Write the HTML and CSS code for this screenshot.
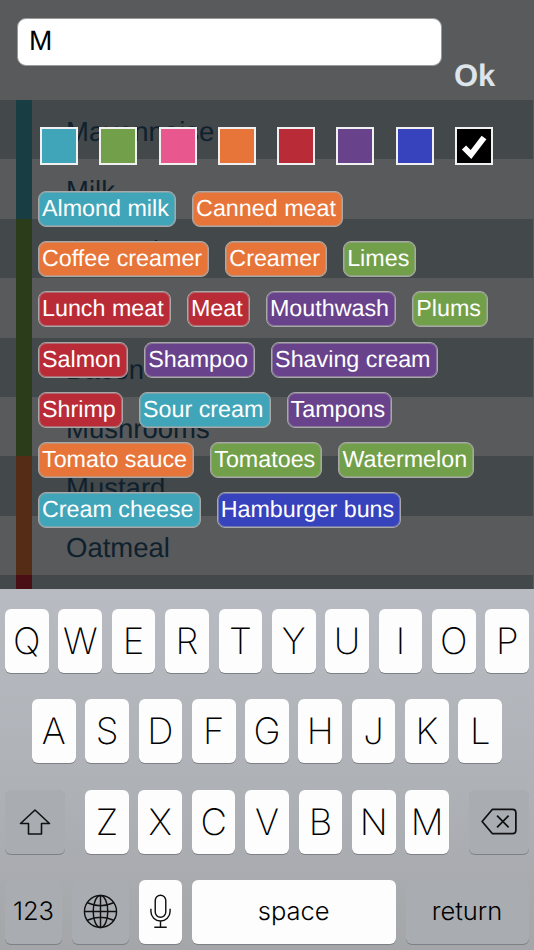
FILE: index.html
```html
<!DOCTYPE html>
<html lang="en">
<head>
<meta charset="utf-8">
<title>Add item</title>
<link rel="stylesheet" href="styles.css">
</head>
<body>
<div class="screen">
  <div class="content">
    <div class="header-space"></div>
    <div class="row dark teal"><span class="strip"></span><span class="name">Mayonnaise</span></div>
    <div class="row teal"><span class="strip"></span><span class="name">Milk</span></div>
    <div class="row dark green"><span class="strip"></span><span class="name">Cucumbers</span></div>
    <div class="row green"><span class="strip"></span><span class="name"></span></div>
    <div class="row dark green"><span class="strip"></span><span class="name">Bacon</span></div>
    <div class="row green"><span class="strip"></span><span class="name">Mushrooms</span></div>
    <div class="row dark orange"><span class="strip"></span><span class="name">Mustard</span></div>
    <div class="row orange"><span class="strip"></span><span class="name">Oatmeal</span></div>
    <div class="row dark red"><span class="strip"></span><span class="name"></span></div>

    <div class="panel">
      <div class="form">
        <div class="input">M</div>
        <div class="ok">Ok</div>
      </div>
      <div class="swatches">
        <span class="swatch c-teal"></span>
        <span class="swatch c-green"></span>
        <span class="swatch c-pink"></span>
        <span class="swatch c-orange"></span>
        <span class="swatch c-red"></span>
        <span class="swatch c-purple"></span>
        <span class="swatch c-blue"></span>
        <span class="swatch c-black">
          <svg viewBox="0 0 34 34" width="34" height="34"><path d="M7 18.5 L14 25.5 L27 8.5" fill="none" stroke="#fff" stroke-width="6"/></svg>
        </span>
      </div>
      <div class="tags">
        <span class="tag c-teal">Almond milk</span>
        <span class="tag c-orange">Canned meat</span>
        <span class="tag c-orange">Coffee creamer</span>
        <span class="tag c-orange">Creamer</span>
        <span class="tag c-green">Limes</span>
        <span class="tag c-red">Lunch meat</span>
        <span class="tag c-red">Meat</span>
        <span class="tag c-purple">Mouthwash</span>
        <span class="tag c-green">Plums</span>
        <span class="tag c-red">Salmon</span>
        <span class="tag c-purple">Shampoo</span>
        <span class="tag c-purple">Shaving cream</span>
        <span class="tag c-red">Shrimp</span>
        <span class="tag c-teal">Sour cream</span>
        <span class="tag c-purple">Tampons</span>
        <span class="tag c-orange">Tomato sauce</span>
        <span class="tag c-green">Tomatoes</span>
        <span class="tag c-green">Watermelon</span>
        <span class="tag c-teal">Cream cheese</span>
        <span class="tag c-blue">Hamburger buns</span>
      </div>
    </div>
  </div>

  <div class="keyboard">
    <div class="keys keys-top">
      <span class="key">Q</span><span class="key">W</span><span class="key">E</span><span class="key">R</span><span class="key">T</span><span class="key">Y</span><span class="key">U</span><span class="key">I</span><span class="key">O</span><span class="key">P</span>
    </div>
    <div class="keys keys-mid">
      <span class="key">A</span><span class="key">S</span><span class="key">D</span><span class="key">F</span><span class="key">G</span><span class="key">H</span><span class="key">J</span><span class="key">K</span><span class="key">L</span>
    </div>
    <div class="keys keys-low">
      <span class="key fn wide">
        <svg viewBox="0 0 32 28" width="32" height="28"><path d="M16 2 L30.5 15.5 H22.5 V26 H9.5 V15.5 H1.5 Z" fill="none" stroke="#111" stroke-width="1.6" stroke-linejoin="round"/></svg>
      </span>
      <div class="letters">
        <span class="key">Z</span><span class="key">X</span><span class="key">C</span><span class="key">V</span><span class="key">B</span><span class="key">N</span><span class="key">M</span>
      </div>
      <span class="key fn wide">
        <svg viewBox="0 0 38 28" width="38" height="27"><path d="M12 1.5 H33 Q36.500 1.500 36.500 5 V23 Q36.500 26.500 33 26.500 H12 L1.500 14 Z" fill="none" stroke="#111" stroke-width="1.8" stroke-linejoin="round"/><path d="M17 8 L29 20 M29 8 L17 20" stroke="#111" stroke-width="1.8"/></svg>
      </span>
    </div>
    <div class="keys keys-bottom">
      <span class="key fn word k123">123</span>
      <span class="key fn kglobe">
        <svg viewBox="0 0 36 36" width="35" height="35"><g fill="none" stroke="#111" stroke-width="1.500"><circle cx="18" cy="18" r="16.500"/><ellipse cx="18" cy="18" rx="7.500" ry="16.500"/><path d="M18 1.500 V34.500 M1.500 18 H34.500 M4.500 9 Q18 15 31.500 9 M4.500 27 Q18 21 31.500 27"/></g></svg>
      </span>
      <span class="key kmic">
        <svg viewBox="0 0 24 36" width="23" height="35"><g fill="none" stroke="#111" stroke-width="1.500"><rect x="6.500" y="1" width="11" height="23" rx="5.500"/><path d="M2 15 V18 A10 10 0 0 0 22 18 V15 M12 28 V34.500 M5.500 34.500 H18.500"/></g></svg>
      </span>
      <span class="key word kspace">space</span>
      <span class="key fn word kreturn">return</span>
    </div>
  </div>
</div>
</body>
</html>
```
FILE: styles.css
```css
* { box-sizing: border-box; }
html, body { margin: 0; padding: 0; }
body { width: 534px; height: 950px; overflow: hidden; font-family: "Liberation Sans", Arial, sans-serif; text-rendering: geometricPrecision; }

.screen { width: 534px; height: 950px; display: flex; flex-direction: column; overflow: hidden; }

.content { position: relative; height: 589px; flex: none; overflow: hidden; background: #595a5c; }
.header-space { height: 100px; }

.row { height: 59.4px; display: flex; align-items: stretch; padding-left: 16px; margin-right: 1px; }
.row.dark { background: #43484b; }
.strip { width: 16px; flex: none; }
.teal .strip { background: #183d42; }
.green .strip { background: #2b3c1a; }
.orange .strip { background: #552c16; }
.red .strip { background: #4a0f14; }
.name { margin-left: 34px; padding-top: 2px; font-size: 27.500px; line-height: 59.4px; color: #0e212d; }

.panel { position: absolute; inset: 0; padding: 18px 0 0 0; }
.form { display: flex; height: 72px; padding-left: 17px; }
.input { width: 425px; height: 48px; background: #fff; border: 1px solid #9a9a9a; border-radius: 9px; padding-left: 11px; font-size: 28px; line-height: 44px; color: #000; }
.ok { margin-left: 12px; align-self: flex-end; position: relative; top: 4px; font-size: 31px; line-height: 36px; font-weight: 700; color: #dde4ea; }

.swatches { display: flex; justify-content: space-between; margin: 37px 41px 0 40px; }
.swatch { width: 38px; height: 38px; border: 2px solid #f0f0f0; display: block; }
.swatch svg { display: block; }
.tag { display: block; height: 36px; padding: 0 6.200px 0 3px; font-size: 23.300px; line-height: 33px; color: #fff; border: 1px solid #a8a8a8; box-shadow: inset 0 0 0 1px rgba(170, 170, 170, 0.5); border-radius: 8px; white-space: nowrap; }
.tags { display: flex; flex-wrap: wrap; gap: 14.200px 16px; margin: 26px 34px 0 38px; }

.c-teal { background: #41a5b9; }
.c-green { background: #72a04a; }
.c-pink { background: #e8578e; }
.c-orange { background: #e77539; }
.c-red { background: #b92c37; }
.c-purple { background: #68438c; }
.c-blue { background: #3742bd; }
.c-black { background: #000; }

.keyboard { flex: 1; background: linear-gradient(#b8bcc2, #aeb1b6 55%, #a4a6a9); padding-top: 20px; display: flex; flex-direction: column; gap: 26.300px; }
.keys { display: flex; height: 64px; flex: none; gap: 9.700px; }
.keys-top { padding: 0 5px; }
.keys-mid { padding: 0 32px; }
.keys-low { padding: 0 5.400px; justify-content: space-between; }
.keys-bottom { padding: 0 5px; gap: 10px; }
.letters { display: flex; gap: 9.700px; width: 364px; }
.keys-top .key, .keys-mid .key, .letters .key { flex: 1; }

.key { display: flex; align-items: center; justify-content: center; background: #fdfdfd; border-radius: 6px; box-shadow: 0 1px 0 #7d8084; font-family: Inter, "Liberation Sans", sans-serif; font-weight: 250; font-size: 36.500px; color: #000; }
.key.fn { background: #a9adb2; }
.wide { width: 60px; }
.word { font-size: 25.500px; font-weight: 300; }
.k123 { width: 57px; }
.kglobe { width: 56.500px; }
.kmic { width: 43.500px; }
.kspace { width: 203.500px; }
.kreturn { width: 123px; }
```
